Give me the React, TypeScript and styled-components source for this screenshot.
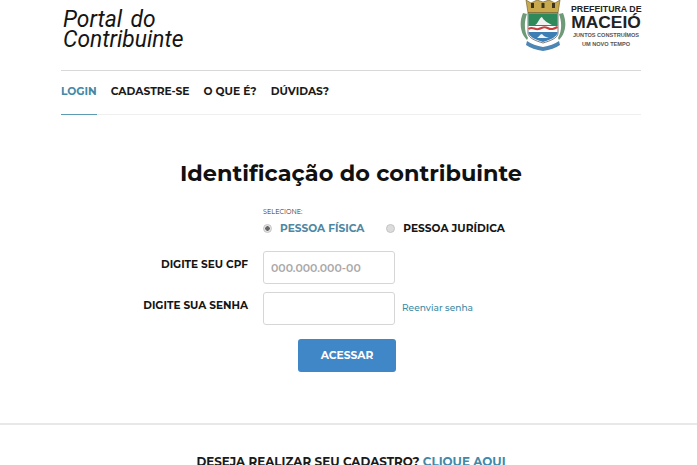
import React from 'react';
import styled, { createGlobalStyle } from 'styled-components';

const GlobalStyle = createGlobalStyle`
  html, body {
    margin: 0;
    padding: 0;
    background: #fff;
    overflow: hidden;
  }
  body {
    font-family: "Montserrat", "Inter", "Liberation Sans", Arial, sans-serif;
  }
`;

const Page = styled.div`
  width: 697px;
  height: 465px;
  overflow: hidden;
  display: flex;
  flex-direction: column;
`;

const Header = styled.header`
  flex: none;
  height: 70px;
  margin: 0 56px 0 61px;
  display: flex;
  justify-content: space-between;
  border-bottom: 1px solid #d8d8d8;
`;

const PortalTitle = styled.div`
  margin: 9px 0 0 2px;
  font-family: "Roboto", "Liberation Sans", sans-serif;
  font-style: italic;
  font-size: 24px;
  line-height: 20px;
  word-spacing: 3px;
  color: #151515;
  transform: scaleX(0.95);
  transform-origin: left top;
`;

const Brand = styled.div`
  display: flex;
  gap: 5px;
  margin-top: -2px;
`;

const BrandText = styled.div`
  width: 70px;
  padding-top: 6px;
  text-align: center;
  font-family: "Liberation Sans", Arial, sans-serif;
  color: #222;
`;

const BrandTop = styled.div`
  font-size: 8.8px;
  font-weight: 700;
  line-height: 10px;
  white-space: nowrap;
`;

const BrandCity = styled.div`
  font-size: 17.4px;
  font-weight: 700;
  line-height: 17px;
`;

const BrandTag = styled.div`
  font-size: 5.6px;
  font-weight: 700;
  line-height: 8.5px;
  color: #555;
  white-space: nowrap;
`;

const Nav = styled.nav`
  flex: none;
  margin: 0 56px 0 61px;
  height: 43px;
  display: flex;
  gap: 14px;
  border-bottom: 1px solid #efefef;
`;

const NavItem = styled.a<{ $active?: boolean }>`
  display: block;
  height: 43px;
  line-height: 41px;
  font-size: 10.7px;
  font-weight: 700;
  color: ${(p) => (p.$active ? '#3f8aa8' : '#1a1a1a')};
  border-bottom: ${(p) => (p.$active ? '1px solid #5b9bb3' : 'none')};
`;

const Main = styled.main`
  flex: none;
  display: flex;
  flex-direction: column;
  align-items: center;
`;

const Title = styled.h1`
  margin: 42px 0 0 5px;
  font-size: 22.4px;
  line-height: 32px;
  font-weight: 700;
  color: #111;
  text-align: center;
`;

const Form = styled.form`
  display: grid;
  grid-template-columns: 248px 132px auto;
  column-gap: 15px;
  width: 100%;
  margin-top: 19px;
  align-items: center;
`;

const PersonCell = styled.div`
  grid-column: 2 / 4;
`;

const SelectLabel = styled.div`
  font-size: 6.5px;
  line-height: 9px;
  color: #333;
`;

const Radios = styled.div`
  display: flex;
  margin-top: 2px;
  gap: 22px;
  height: 18px;
  align-items: center;
`;

const RadioLabel = styled.label<{ $active?: boolean }>`
  display: flex;
  align-items: center;
  gap: 8px;
  font-size: 10.6px;
  font-weight: 700;
  white-space: nowrap;
  color: ${(p) => (p.$active ? '#4f87a3' : '#151515')};
`;

const RadioDot = styled.span<{ $active?: boolean }>`
  width: 9px;
  height: 9px;
  box-sizing: border-box;
  border-radius: 50%;
  border: 1px solid #c4c4c4;
  background: ${(p) =>
    p.$active ? 'radial-gradient(circle, #666 0 2px, #e4e4e4 2.5px)' : '#dcdcdc'};
`;

const FieldLabel = styled.label`
  justify-self: end;
  font-size: 10.5px;
  font-weight: 700;
  color: #151515;
  white-space: nowrap;
  margin-top: -6px;
`;

const Input = styled.input`
  width: 132px;
  height: 33px;
  box-sizing: border-box;
  border: 1px solid #d6d6d6;
  border-radius: 3px;
  padding: 0 7px;
  font: inherit;
  font-size: 10.9px;
  font-weight: 600;
  background: #fff;
  &::placeholder {
    color: #a8a8a8;
    opacity: 1;
  }
`;

const ResendLink = styled.a`
  font-size: 9.1px;
  font-weight: 500;
  color: #3d8aa3;
  margin: -3px 0 0 -8px;
`;

const Spacer = styled.div<{ $height: number }>`
  grid-column: 1 / 4;
  height: ${(p) => p.$height}px;
`;

const Button = styled.button`
  width: 98px;
  height: 33px;
  margin: 14px 0 0 -3px;
  border: 0;
  border-radius: 3px;
  background: #3f87c7;
  color: #fff;
  font: inherit;
  font-size: 10.7px;
  font-weight: 700;
`;

const Divider = styled.div`
  width: 100%;
  height: 2px;
  background: #e8e8e8;
  margin-top: 51px;
`;

const Signup = styled.p`
  margin: 29px 0 0 5px;
  font-size: 11.9px;
  line-height: 16px;
  font-weight: 700;
  color: #1a1a1a;
  white-space: nowrap;
`;

const SignupLink = styled.a`
  color: #3f8aa8;
`;

const Crest = () => (
  <svg width="46" height="54" viewBox="0 0 46 54" aria-hidden="true">
    <path d="M3 15C-1 24 0 35 7 42l1-2C4 33 4 24 7 16z" fill="#6f9a78" />
    <path d="M43 15c4 9 3 20-4 27l-1-2c4-7 4-16 1-24z" fill="#6f9a78" />
    <path d="M6 2l5 3 6-3 6 2 6-2 6 3 5-3-2 13H8z" fill="#c9a94e" stroke="#6a5720" strokeWidth=".6" />
    <rect x="11" y="5" width="3" height="5" fill="#3d3420" />
    <rect x="21.5" y="5" width="3" height="5" fill="#3d3420" />
    <rect x="32" y="5" width="3" height="5" fill="#3d3420" />
    <path d="M8 15h30v20c0 5-8 8-15 10-7-2-15-5-15-10z" fill="#fff" stroke="#444" strokeWidth=".7" />
    <path d="M8.4 15.400h29.200V28H8.400z" fill="#2f8a5b" />
    <path d="M15 27c3-1 4-7 7-8 1 3 6 6 10 8z" fill="#f2f2f2" />
    <path d="M8.500 31c4-3 6 1 10 0s5-3 9-1 6 1 10-1" fill="none" stroke="#c83f3f" strokeWidth="2" />
    <path d="M8.400 34h29.200c0 5-8 8-14.600 10C16.400 42 8.400 39 8.400 34z" fill="#3d7fb5" />
    <path d="M17 40c2-1 3-4 5-4 1 2 4 3 7 4z" fill="#f2f2f2" />
    <path d="M7 43c4 3 10 5 16 6 6-1 12-3 16-6l1 4c-4 3-10 5-17 6-7-1-13-3-17-6z" fill="#4d86b5" />
  </svg>
);

export default function App() {
  return (
    <Page>
      <GlobalStyle />
      <Header>
        <PortalTitle>
          Portal do
          <br />
          Contribuinte
        </PortalTitle>
        <Brand>
          <Crest />
          <BrandText>
            <BrandTop>PREFEITURA DE</BrandTop>
            <BrandCity>MACEIÓ</BrandCity>
            <BrandTag>JUNTOS CONSTRUÍMOS</BrandTag>
            <BrandTag>UM NOVO TEMPO</BrandTag>
          </BrandText>
        </Brand>
      </Header>
      <Nav>
        <NavItem $active>LOGIN</NavItem>
        <NavItem>CADASTRE-SE</NavItem>
        <NavItem>O QUE É?</NavItem>
        <NavItem>DÚVIDAS?</NavItem>
      </Nav>
      <Main>
        <Title>Identificação do contribuinte</Title>
        <Form>
          <div />
          <PersonCell>
            <SelectLabel>SELECIONE:</SelectLabel>
            <Radios>
              <RadioLabel $active>
                <RadioDot $active />
                PESSOA FÍSICA
              </RadioLabel>
              <RadioLabel>
                <RadioDot />
                PESSOA JURÍDICA
              </RadioLabel>
            </Radios>
          </PersonCell>
          <Spacer $height={14} />
          <FieldLabel>DIGITE SEU CPF</FieldLabel>
          <Input placeholder="000.000.000-00" />
          <div />
          <Spacer $height={8} />
          <FieldLabel>DIGITE SUA SENHA</FieldLabel>
          <Input type="password" />
          <ResendLink>Reenviar senha</ResendLink>
        </Form>
        <Button type="button">ACESSAR</Button>
        <Divider />
        <Signup>
          DESEJA REALIZAR SEU CADASTRO? <SignupLink>CLIQUE AQUI</SignupLink>
        </Signup>
      </Main>
    </Page>
  );
}
